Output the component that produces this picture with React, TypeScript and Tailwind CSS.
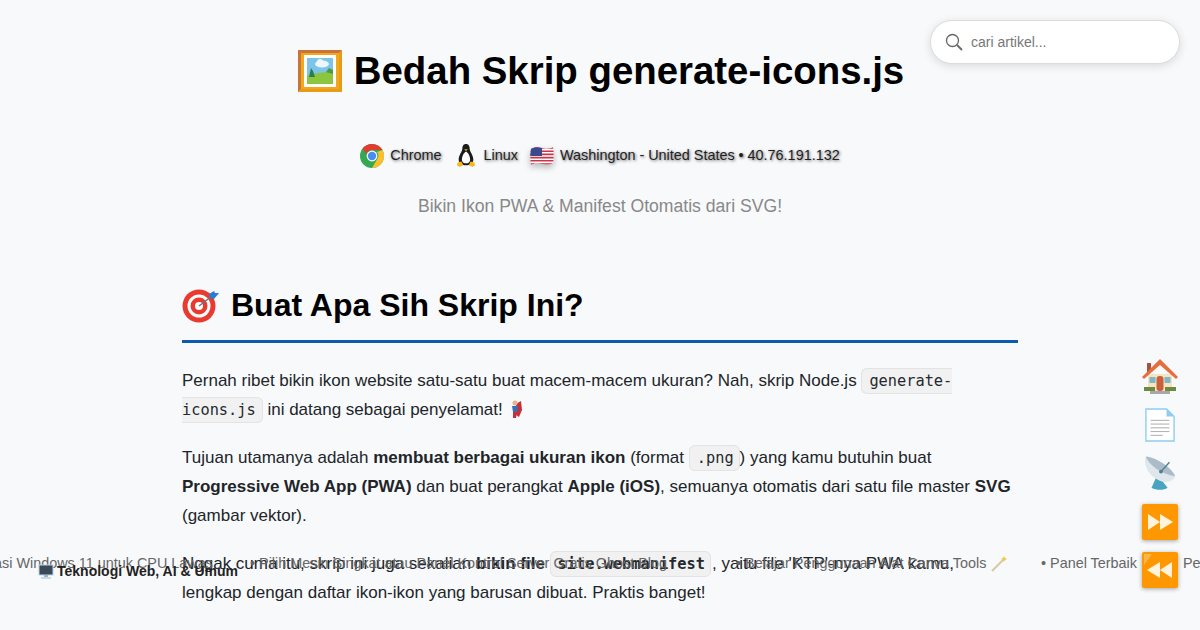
const PictureIcon = () => (
  <svg viewBox="0 0 44 42" className="h-[42px] w-[44px]">
    <rect width="44" height="42" fill="#f2a81d" />
    <path d="M0 0h44l-3 3H3v36l-3 3z" fill="#c9743a" />
    <path d="M44 42H0l3-3h38V3l3-3z" fill="#e99a17" />
    <rect x="6" y="5" width="32" height="32" fill="#fff" />
    <rect x="9" y="8" width="26" height="26" fill="#7cc4ea" />
    <path d="M9 26c7-4 17-2 26-6v14H9z" fill="#8cc63f" />
    <path d="M11 27l2-9 2 3 2 6z" fill="#2f7d4b" />
    <path d="M28 22l3-4 4 2v4z" fill="#4f9a45" />
    <ellipse cx="24" cy="14" rx="7" ry="3.500" fill="#eef7fc" />
    <circle cx="22" cy="12" r="3" fill="#eef7fc" />
  </svg>
);

const ChromeIcon = () => (
  <svg viewBox="0 0 24 24" className="h-6 w-6">
    <circle cx="12" cy="12" r="12" fill="#34a853" />
    <path d="M12 0a12 12 0 0 1 10.400 6H12a6 6 0 0 0-5.600 3.800L2.500 4.600A12 12 0 0 1 12 0z" fill="#e33b2e" />
    <path d="M22.400 6A12 12 0 0 1 12 24l5-8.600A6 6 0 0 0 17 8z" fill="#fbc02d" />
    <circle cx="12" cy="12" r="5.400" fill="#fff" />
    <circle cx="12" cy="12" r="4.200" fill="#4a8df0" />
  </svg>
);

const TuxIcon = () => (
  <svg viewBox="0 0 24 26" className="h-6 w-[22px]">
    <path d="M12 0c-3 0-4 2.500-4 5 0 3-4 7-4 12 0 3 3 6 8 6s8-3 8-6c0-5-4-9-4-12 0-2.500-1-5-4-5z" fill="#1b1b1b" />
    <path d="M12 8c-2 1-4.500 5-4.500 9 0 2.500 2 4 4.500 4s4.500-1.500 4.500-4c0-4-2.500-8-4.500-9z" fill="#fff" />
    <path d="M10 5.500h4L12 7.500z" fill="#f5b81f" />
    <path d="M3 20l4-1 2 4-4 2-3-2zM21 20l-4-1-2 4 4 2 3-2z" fill="#f5b81f" />
  </svg>
);

const FlagIcon = () => (
  <svg viewBox="0 0 24 20" className="h-5 w-6">
    <defs>
      <clipPath id="flag-clip">
        <path d="M1 3c3-2 7-2 11-1s8 1 11-1c1 5 1 11 0 16-3 2-7 2-11 1s-8-1-11 1c-1-5-1-11 0-16z" />
      </clipPath>
    </defs>
    <g clipPath="url(#flag-clip)">
      <rect width="24" height="20" fill="#fff" />
      <path d="M0 2h24M0 5.200h24M0 8.400h24M0 11.600h24M0 14.800h24M0 18h24" stroke="#c8354a" strokeWidth="1.600" />
      <rect width="12" height="10" fill="#3c4a8c" />
    </g>
  </svg>
);

const TargetIcon = () => (
  <svg viewBox="0 0 38 36" className="h-9 w-[38px]">
    <circle cx="17" cy="19" r="16.500" fill="#e83a2e" />
    <circle cx="17" cy="19" r="11.500" fill="#fff" />
    <circle cx="17" cy="19" r="8.500" fill="#e83a2e" />
    <circle cx="17" cy="19" r="4" fill="#fff" />
    <path d="M17 19L30 9" stroke="#6b7680" strokeWidth="1.500" />
    <path d="M27 7l5-3 1 2 4 0-5 6-4-1z" fill="#2a7dd1" />
  </svg>
);

const HeroIcon = () => (
  <svg viewBox="0 0 16 20" className="h-5 w-4">
    <path d="M9 5l5-3 1 9-3 7-3-2z" fill="#c62f3a" />
    <circle cx="8" cy="4" r="2.500" fill="#e8b48a" />
    <path d="M5 7h6l-1 6H6z" fill="#3b6fb5" />
    <path d="M6 13h4l-1 6H6z" fill="#c62f3a" />
  </svg>
);

const HomeIcon = () => (
  <svg viewBox="0 0 36 36" className="h-9 w-9">
    <rect x="5" y="4" width="4" height="10" fill="#a5533a" />
    <path d="M6 15h24v17H6z" fill="#f8e3c2" />
    <path d="M18 0L0 18l2 2L18 6l16 14 2-2z" fill="#e46f3d" />
    <rect x="14.500" y="17" width="7" height="15" rx="3" fill="#c9603c" />
    <rect x="7.500" y="18" width="6" height="6" fill="#7cb6c9" />
    <rect x="22.500" y="18" width="6" height="6" fill="#7cb6c9" />
    <rect x="2" y="28" width="11" height="4" fill="#6d8b3a" />
    <rect x="23" y="28" width="11" height="4" fill="#6d8b3a" />
    <rect x="8" y="32" width="20" height="3" fill="#a5a9ad" />
  </svg>
);

const PageIcon = () => (
  <svg viewBox="0 0 32 36" className="h-9 w-[30px]">
    <path d="M1 1h22l8 8v26H1z" fill="#fff" stroke="#8fcdf0" strokeWidth="1.500" />
    <path d="M23 1l8 8h-8z" fill="#8fcdf0" />
    <path d="M6 13h20M6 17h20M6 21h20M6 25h20M6 29h13" stroke="#a8a8a8" strokeWidth="1" />
  </svg>
);

const SatelliteIcon = () => (
  <svg viewBox="0 0 36 38" className="h-[37px] w-[34px]">
    <path d="M14 23l-5 11c5 3 13 3 17 0l-7-9z" fill="#4ba3c4" />
    <path d="M3 1c-4 10 6 26 21 27 5 0 10-3 10-6C30 13 14 2 3 1z" fill="#dfe7ec" />
    <path d="M3 1c3 8 14 18 31 21-3-9-20-20-31-21z" fill="#a9bcc8" />
    <path d="M19 17l9-10" stroke="#4f7d92" strokeWidth="1.500" />
    <circle cx="19" cy="17" r="2" fill="#4f7d92" />
  </svg>
);

const ForwardIcon = () => (
  <svg viewBox="0 0 36 36" className="h-9 w-9 drop-shadow-[0_1px_2px_rgba(0,0,0,0.35)]">
    <rect width="36" height="36" rx="2" fill="#ff9800" />
    <path d="M6 10l12 8-12 8zM18 10l13 8-13 8z" fill="#fff3dd" />
  </svg>
);

const RewindIcon = () => (
  <svg viewBox="0 0 36 36" className="h-9 w-9 drop-shadow-[0_1px_2px_rgba(0,0,0,0.35)]">
    <rect width="36" height="36" rx="2" fill="#ff9800" />
    <path d="M2 2h8L2 13z" fill="#ffb74d" />
    <path d="M30 10l-12 8 12 8zM18 10L5 18l13 8z" fill="#fff3dd" />
  </svg>
);

const DesktopIcon = () => (
  <svg viewBox="0 0 16 16" className="h-4 w-4">
    <rect x="1" y="1" width="14" height="10" fill="#3b4a57" stroke="#b8d3e6" />
    <rect x="6" y="11" width="4" height="2" fill="#9fb4c2" />
    <rect x="3" y="13" width="10" height="2" fill="#c5dcec" />
  </svg>
);

const WandIcon = () => (
  <svg viewBox="0 0 16 16" className="h-4 w-4">
    <path d="M1 15L13 3" stroke="#d9c9a0" strokeWidth="2" />
    <path d="M13 0l1 2 2 1-2 1-1 2-1-2-2-1 2-1z" fill="#f2c84b" />
  </svg>
);

const Code = ({ children, cut }: { children: string; cut?: "l" | "r" }) => (
  <code
    className={`border border-[#e3e3e3] bg-[#f1f1f1] py-[3px] font-['DejaVu_Sans_Mono',monospace] text-[15.3px] text-[#24292e] ${
      cut === "r"
        ? "rounded-l-md border-r-0 pl-[7px]"
        : cut === "l"
          ? "rounded-r-md border-l-0 pr-[6px]"
          : "rounded-md pr-[5px] pl-[7px]"
    }`}
  >
    {children}
  </code>
);

export default function App() {
  return (
    <div className="relative h-[630px] w-[1200px] overflow-hidden bg-[#f8f9fb] font-['Liberation_Sans',sans-serif] text-[#212529]">
      {/* search */}
      <div className="absolute top-[20px] right-[20px] flex h-[44px] w-[250px] items-center gap-[8px] rounded-full border border-[#dcdcdc] bg-white pl-[14px] shadow-[0_2px_10px_rgba(0,0,0,0.13)]">
        <svg viewBox="0 0 18 18" className="h-[18px] w-[18px] text-[#666]" fill="none" stroke="currentColor" strokeWidth="1.300">
          <circle cx="7.500" cy="7.500" r="6" />
          <path d="M12 12l5 5" strokeWidth="1.800" />
        </svg>
        <span className="text-[14px] text-[#777]">cari artikel...</span>
      </div>

      {/* side nav */}
      <div className="absolute top-[359px] right-[22px] flex w-9 flex-col items-center gap-[12px]">
        <HomeIcon />
        <PageIcon />
        <SatelliteIcon />
        <ForwardIcon />
        <RewindIcon />
      </div>

      <header className="flex flex-col items-center pt-[45px]">
        <h1 className="flex h-[52px] items-center gap-[12px] pl-[2px] text-[38.4px] font-bold text-black">
          <PictureIcon />
          Bedah Skrip generate-icons.js
        </h1>
        <div className="mt-[47px] flex h-[24px] items-center text-[14.4px] text-[#222] [text-shadow:1px_1px_3px_rgba(0,0,0,0.6)]">
          <ChromeIcon />
          <span className="ml-[6px]">Chrome</span>
          <span className="ml-[13px]"><TuxIcon /></span>
          <span className="ml-[7px]">Linux</span>
          <span className="ml-[12px] drop-shadow-[0_3px_3px_rgba(0,0,0,0.25)]"><FlagIcon /></span>
          <span className="ml-[6px]">Washington - United States • 40.76.191.132</span>
        </div>
        <p className="mt-[25px] text-[17.6px] text-[#888]">Bikin Ikon PWA &amp; Manifest Otomatis dari SVG!</p>
      </header>

      <main className="mx-auto mt-[65px] w-[836px]">
        <h2 className="flex items-center gap-[11px] border-b-[3px] border-[#0b5cad] pb-[14px] text-[32px] leading-[42px] font-bold text-black">
          <TargetIcon />
          Buat Apa Sih Skrip Ini?
        </h2>
        <p className="mt-[24px] text-[17px] leading-[28.9px]">
          Pernah ribet bikin ikon website satu-satu buat macem-macem ukuran? Nah, skrip Node.js <Code cut="r">generate-</Code>
          <br />
          <Code cut="l">icons.js</Code> ini datang sebagai penyelamat! <span className="inline-block align-[-4px]"><HeroIcon /></span>
        </p>
        <p className="mt-[19px] text-[17px] leading-[28.9px]">
          Tujuan utamanya adalah <b>membuat berbagai ukuran ikon</b> (format <Code>.png</Code>) yang kamu butuhin buat <b>Progressive Web App (PWA)</b> dan buat perangkat <b>Apple (iOS)</b>, semuanya otomatis dari satu file master <b>SVG</b> (gambar vektor).
        </p>
        <p className="mt-[19px] text-[17px] leading-[28.9px]">
          Nggak cuma itu, skrip ini juga sekalian <b>bikin file</b> <b><Code>site.webmanifest</Code></b><span className="ml-px">, yaitu file 'KTP'-nya PWA kamu,</span>
          <br />
          lengkap dengan daftar ikon-ikon yang barusan dibuat. Praktis banget!
        </p>
      </main>

      {/* ticker overlays the article */}
      <div className="absolute top-[553px] left-0 h-[18px] w-[1200px] text-[14.4px] whitespace-nowrap text-[#666]">
        <span className="absolute left-[-6px]">asi Windows 11 untuk CPU Lawas</span>
        <span className="absolute left-[250px]">• Pilih Mesin Singkat atau Panel Kontrol Server Gratis Ghost Blog</span>
        <span className="absolute left-[736px] flex items-center gap-[5px]">• Belajar Penggunaan Alat Canva Tools <WandIcon /></span>
        <span className="absolute left-[1041px]">• Panel Terbaik</span>
        <span className="absolute left-[1183px]">Pe</span>
      </div>
      <div className="absolute top-[561px] left-[38px] flex items-center gap-[3px] text-[14px] font-bold text-[#222]">
        <DesktopIcon />
        Teknologi Web, AI &amp; Umum
      </div>
    </div>
  );
}
